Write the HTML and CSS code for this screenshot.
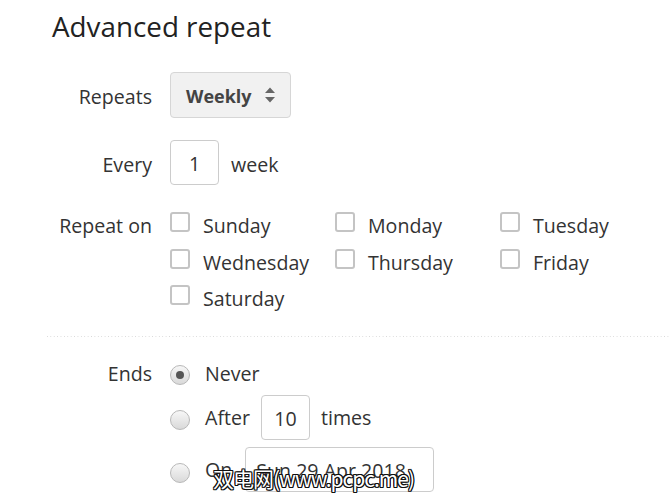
FILE: index.html
```html
<!DOCTYPE html>
<html>
<head>
<meta charset="utf-8">
<link rel="stylesheet" href="styles.css">
</head>
<body>
<div class="page">
  <h1 class="title">Advanced repeat</h1>

  <div class="field f-repeats">
    <div class="label">Repeats</div>
    <div class="control">
      <div class="select">
        <span>Weekly</span>
        <svg class="arrows" width="12" height="16" viewBox="0 0 12 16"><path d="M1 6 L6 0.5 L11 6 Z M1 10 L6 15.5 L11 10 Z" fill="#666"/></svg>
      </div>
    </div>
  </div>

  <div class="field f-every">
    <div class="label">Every</div>
    <div class="control inline">
      <div class="box num">1</div>
      <span>week</span>
    </div>
  </div>

  <div class="field f-days">
    <div class="label">Repeat on</div>
    <div class="days">
      <label class="day"><span class="check"></span>Sunday</label>
      <label class="day"><span class="check"></span>Monday</label>
      <label class="day"><span class="check"></span>Tuesday</label>
      <label class="day"><span class="check"></span>Wednesday</label>
      <label class="day"><span class="check"></span>Thursday</label>
      <label class="day"><span class="check"></span>Friday</label>
      <label class="day"><span class="check"></span>Saturday</label>
    </div>
  </div>

  <div class="divider"></div>

  <div class="field f-ends">
    <div class="label">Ends</div>
    <div class="ends">
      <div class="opt o-never"><span class="radio on"></span>Never</div>
      <div class="opt o-after"><span class="radio"></span>After <div class="box num">10</div> times</div>
      <div class="opt o-on"><span class="radio"></span>On <div class="box date">Sun 29 Apr 2018</div></div>
    </div>
  </div>

  <div class="watermark">双电网(www.pcpc.me)</div>
</div>
</body>
</html>
```

FILE: styles.css
```css
* { box-sizing: border-box; }
html, body { margin: 0; padding: 0; background: #fff; }
body {
  font-family: "Open Sans", "Noto Sans", sans-serif;
  color: #333;
  font-size: 19.6px;
  width: 670px;
  height: 504px;
  overflow: hidden;
}
.page { position: relative; height: 504px; }
.title {
  margin: 0;
  padding: 6px 0 0 52px;
  font-size: 27.8px;
  font-weight: 400;
  line-height: 40px;
  color: #222;
}
.field {
  display: grid;
  grid-template-columns: 152px 1fr;
  column-gap: 18px;
  align-items: center;
}
.label { text-align: right; }
.f-repeats { margin-top: 26px; }
.f-repeats .label { padding-top: 2px; }
.f-every { margin-top: 22px; }
.f-every .label { padding-top: 3px; }
.inline span { padding-top: 3px; }
.f-days { margin-top: 22px; align-items: start; }
.f-days .label { line-height: 36px; padding-top: 1px; }
.select {
  width: 121px;
  height: 46px;
  border: 1px solid #d6d6d6;
  border-radius: 4px;
  background: #f1f1f1;
  display: flex;
  align-items: center;
  justify-content: space-between;
  padding: 2px 14px 0 15px;
  font-weight: 700;
  font-size: 18px;
  color: #444;
}
.arrows { margin-top: -2px; }
.inline { display: flex; align-items: center; gap: 12px; }
.box {
  border: 1px solid #ccc;
  border-radius: 4px;
  height: 45px;
  display: flex;
  align-items: center;
  background: #fff;
  padding-top: 2px;
}
.num { width: 49px; justify-content: center; }
.days {
  display: grid;
  grid-template-columns: 165px 165px 165px;
  grid-auto-rows: 36.5px;
}
.day { display: flex; align-items: center; gap: 13px; padding-top: 1px; }
.check {
  width: 20px;
  height: 20px;
  border: 2px solid #c4c4c4;
  border-radius: 3px;
  margin-top: -7px;
  flex: none;
}
.divider {
  margin: 19px 0 0 47px;
  height: 1px;
  background-image: linear-gradient(to right, #d8d8d8 1px, transparent 1px);
  background-size: 3.4px 1px;
}
.f-ends { margin-top: 21px; align-items: start; }
.f-ends .label { line-height: 36px; margin-top: -2px; }
.ends { display: flex; flex-direction: column; }
.opt { display: flex; align-items: center; gap: 15px; }
.o-never { height: 36px; }
.o-never .radio { margin-top: 2px; }
.o-never { padding-bottom: 4px; }
.o-after { height: 45px; margin-top: 1px; gap: 0; }
.o-after .radio { margin-right: 15px; margin-top: 6px; }
.o-after .box { margin: 0 11px; }
.o-on { height: 44px; margin-top: 8px; gap: 0; }
.o-on .radio { margin-right: 15px; margin-top: 6px; }
.o-on .box { margin-left: 13px; width: 189px; padding-left: 10px; }
.radio {
  width: 20px;
  height: 20px;
  border-radius: 50%;
  border: 1px solid #b8b8b8;
  background: linear-gradient(#f7f7f7, #d9d9d9);
  flex: none;
  position: relative;
}
.radio.on::after {
  content: "";
  position: absolute;
  left: 5px; top: 5px;
  width: 8px; height: 8px;
  border-radius: 50%;
  background: #555;
}
.watermark {
  position: absolute;
  left: 213px;
  top: 463px;
  font-family: "Noto Sans CJK SC", "DejaVu Sans", sans-serif;
  font-size: 21px;
  color: #fff;
  letter-spacing: -1px;
  text-shadow: -1px -1px 0 #111, 1px -1px 0 #111, -1px 1px 0 #111, 1px 1px 0 #111, 0 1px 0 #111, 0 -1px 0 #111, 1px 0 0 #111, -1px 0 0 #111;
}
```
